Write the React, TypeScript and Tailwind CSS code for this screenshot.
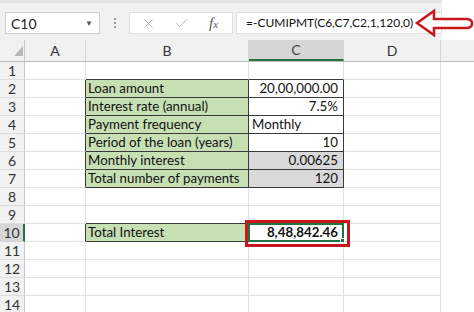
import { X, Check } from 'lucide-react';

type Cell = {
    text?: string;
    align?: 'left' | 'right';
    fill?: 'green' | 'gray';
    bold?: boolean;
};

type Row = {
    n: number;
    b?: Cell;
    c?: Cell;
    darkA?: boolean;
    darkB?: boolean;
    darkBTopless?: boolean;
    darkC?: boolean;
    selected?: boolean;
};

const rows: Row[] = [
    { n: 1, darkBTopless: true },
    { n: 2, b: { text: 'Loan amount', fill: 'green' }, c: { text: '20,00,000.00', align: 'right' }, darkA: true, darkB: true, darkC: true },
    { n: 3, b: { text: 'Interest rate (annual)', fill: 'green' }, c: { text: '7.5%', align: 'right' }, darkA: true, darkB: true, darkC: true },
    { n: 4, b: { text: 'Payment frequency', fill: 'green' }, c: { text: 'Monthly', align: 'left' }, darkA: true, darkB: true, darkC: true },
    { n: 5, b: { text: 'Period of the loan (years)', fill: 'green' }, c: { text: '10', align: 'right' }, darkA: true, darkB: true, darkC: true },
    { n: 6, b: { text: 'Monthly interest', fill: 'green' }, c: { text: '0.00625', align: 'right', fill: 'gray' }, darkA: true, darkB: true, darkC: true },
    { n: 7, b: { text: 'Total number of payments', fill: 'green' }, c: { text: '120', align: 'right', fill: 'gray' }, darkA: true, darkB: true, darkC: true },
    { n: 8 },
    { n: 9, darkBTopless: true },
    { n: 10, b: { text: 'Total Interest', fill: 'green' }, c: { text: '8,48,842.46', align: 'right', bold: true }, darkA: true, darkB: true, selected: true },
    { n: 11 },
    { n: 12 },
    { n: 13 },
    { n: 14 },
];

const font = { fontFamily: 'Lato, "Liberation Sans", sans-serif' };

const FormulaBar = () => (
    <div className="h-[40px] w-[442px] bg-[#f1f1f1] border-t-[3px] border-[#e4e4e4] pt-[9px] flex items-start">
        <div className="ml-[5px] w-[95px] h-[22px] bg-white border border-[#d0d0d0] flex items-center justify-between pl-[5px] pr-[6px]">
            <span className="text-[14px] text-[#222]">C10</span>
            <span className="text-[8px] text-[#555]">▼</span>
        </div>
        <div className="w-[29px] h-[22px] flex flex-col items-center justify-center gap-[2px]">
            <span className="w-[2px] h-[2px] bg-[#9a9a9a]" />
            <span className="w-[2px] h-[2px] bg-[#9a9a9a]" />
            <span className="w-[2px] h-[2px] bg-[#9a9a9a]" />
        </div>
        <div className="w-[104px] h-[22px] bg-white border border-[#e0e0e0] flex items-center pl-[11px]">
            <X size={15} strokeWidth={1.6} className="text-[#b5b5b5]" />
            <Check size={15} strokeWidth={1.6} className="text-[#b5b5b5] ml-[18px]" />
            <span className="ml-[20px] text-[15px] italic text-[#5a5a5a]" style={{ fontFamily: '"Liberation Serif", serif' }}>
                f<span className="text-[11px]">x</span>
            </span>
        </div>
        <div className="ml-[3px] w-[206px] h-[22px] bg-white border border-[#e0e0e0] flex items-center pl-[9px]">
            <span className="text-[12px] text-[#111] whitespace-nowrap">=-CUMIPMT(C6,C7,C2,1,120,0)</span>
        </div>
    </div>
);

const HeaderRow = () => (
    <div className="flex h-[22px] bg-[#f1f1f1] border-b border-[#bdbdbd]">
        <div className="w-[25px] border-r border-[#c8c8c8] relative">
            <svg className="absolute left-[14px] top-[6px]" width="9" height="10" viewBox="0 0 9 10">
                <polygon points="9,0 9,10 0,10" fill="#b9b9b9" />
            </svg>
        </div>
        <div className="w-[61px] border-r border-[#d4d4d4] flex items-center justify-center text-[14px] text-[#333]">A</div>
        <div className="w-[163px] border-r border-[#d4d4d4] flex items-center justify-center text-[14px] text-[#333]">B</div>
        <div className="w-[95px] border-r border-[#d4d4d4] bg-[#d6d6d6] border-b-2 border-b-[#217346] flex items-center justify-center text-[14px] text-[#444]">C</div>
        <div className="w-[97px] border-r border-[#d4d4d4] flex items-center justify-center text-[14px] text-[#333]">D</div>
    </div>
);

const cellBg = (c?: Cell) => (c?.fill === 'green' ? 'bg-[#c6e0b4]' : c?.fill === 'gray' ? 'bg-[#d9d9d9]' : 'bg-white');

const SheetRow = ({ row }: { row: Row }) => (
    <div className="flex h-[18px]">
        <div
            className={
                row.selected
                    ? 'w-[25px] bg-[#d6d6d6] border-r-2 border-r-[#217346] border-b border-b-[#d4d4d4] flex items-center justify-center text-[14px] text-[#333]'
                    : 'w-[25px] bg-[#f1f1f1] border-r border-r-[#c8c8c8] border-b border-b-[#dcdcdc] flex items-center justify-center text-[14px] text-[#333]'
            }
        >
            {row.n}
        </div>
        <div className={row.darkA ? 'w-[61px] border-r border-r-[#3a3a3a] border-b border-b-[#e1e1e1]' : 'w-[61px] border-r border-b border-[#e1e1e1]'} />
        <div
            className={
                (row.darkB
                    ? 'border-r border-b border-[#3a3a3a] '
                    : row.darkBTopless
                      ? 'border-r border-r-[#e1e1e1] border-b border-b-[#3a3a3a] '
                      : 'border-r border-b border-[#e1e1e1] ') +
                'w-[163px] flex items-center pl-[2px] pt-[1px] text-[13.3px] text-[#111] whitespace-nowrap ' +
                cellBg(row.b)
            }
        >
            {row.b?.text}
        </div>
        <div
            className={
                (row.darkC
                    ? 'border-r border-b border-[#3a3a3a] '
                    : row.darkBTopless && row.n === 1
                      ? 'border-r border-r-[#e1e1e1] border-b border-b-[#3a3a3a] '
                      : 'border-r border-b border-[#e1e1e1] ') +
                'w-[95px] relative flex items-center pt-[1px] text-[13.3px] text-[#111] whitespace-nowrap ' +
                (row.c?.align === 'left' ? 'justify-start pl-[3px] ' : 'justify-end pr-[5px] ') +
                (row.c?.bold ? 'font-bold ' : '') +
                cellBg(row.c)
            }
        >
            {row.c?.text}
            {row.selected && (
                <div className="absolute -left-[1px] -top-[1px] w-[96px] h-[19px] border-2 border-[#217346]">
                    <div className="absolute -right-[3px] -bottom-[3px] w-[5px] h-[5px] bg-[#217346] border border-white" />
                </div>
            )}
        </div>
        <div className="w-[97px] border-r border-b border-[#e1e1e1]" />
    </div>
);

export default function App() {
    return (
        <div className="relative w-[474px] h-[312px] bg-white overflow-hidden" style={font}>
            <FormulaBar />
            <HeaderRow />
            {rows.map((row) => (
                <SheetRow key={row.n} row={row} />
            ))}

            {/* red annotation box around C10 */}
            <div className="absolute left-[245px] top-[220px] w-[105px] h-[27px] border-[3px] border-[#c8161d]" />

            {/* red arrow pointing at the formula */}
            <svg className="absolute left-[414px] top-[8px]" width="60" height="30" viewBox="0 0 60 30">
                <path
                    d="M3 15 L20 3 L20 11 L52 11 Q58 11 58 15.5 Q58 20 52 20 L20 20 L20 27 Z"
                    fill="white"
                    stroke="#c8161d"
                    strokeWidth="2.5"
                    strokeLinejoin="miter"
                />
            </svg>
        </div>
    );
}
